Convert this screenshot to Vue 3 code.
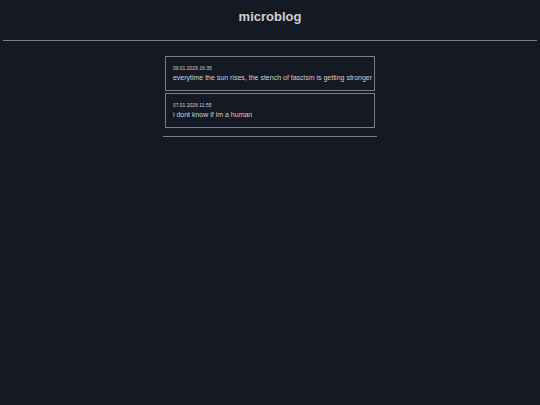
<script setup>
const posts = [
  { date: '09.01.2026 16:35', iso: '2026-01-09T16:35', text: 'everytime the sun rises, the stench of fascism is getting stronger' },
  { date: '07.01.2026 11:55', iso: '2026-01-07T11:55', text: 'i dont know if im a human' },
]
</script>

<template>
  <div class="page">
    <h1 class="title">microblog</h1>
    <hr class="rule" />
    <main class="feed">
      <article v-for="post in posts" :key="post.iso" class="post">
        <time class="date" :datetime="post.iso">{{ post.date }}</time>
        <p class="text">{{ post.text }}</p>
      </article>
      <hr class="rule end" />
    </main>
  </div>
</template>

<style>
body {
  background: #151924;
}
</style>

<style scoped>
.page {
  padding: 8px 3px;
  font-family: "Liberation Sans", Arial, sans-serif;
  color: #cfcfd0;
}
.title {
  margin: 0 0 14px;
  font-size: 13px;
  line-height: 18px;
  text-align: center;
}
.rule {
  height: 1px;
  margin: 0;
  border: 0;
  background: #7b7e86;
}
.feed {
  display: flex;
  flex-direction: column;
  gap: 2px;
  width: fit-content;
  margin: 15px auto 0;
}
.post {
  margin: 0 2px;
  padding: 8px 2px 6px 7px;
  border: 1px solid #7b7e86;
}
.date {
  display: block;
  font-size: 5px;
  line-height: 7px;
}
.text {
  margin: 0;
  font-size: 7px;
  line-height: 12px;
}
.end {
  margin-top: 6px;
}
</style>
